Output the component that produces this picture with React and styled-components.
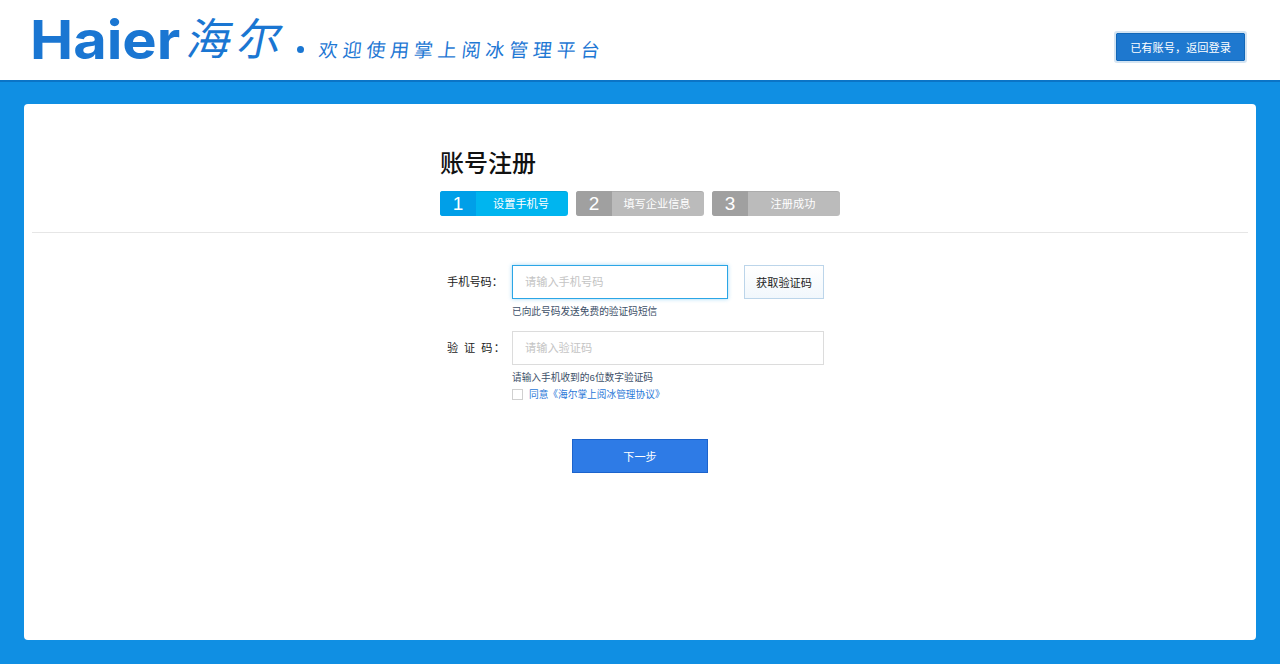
import styled, { createGlobalStyle } from 'styled-components';

const GlobalStyle = createGlobalStyle`
    html, body { margin: 0; padding: 0; height: 100%; }
    body {
        background: #108fe3;
        font-family: "Liberation Sans", "Noto Sans CJK SC", sans-serif;
        font-size: 11.2px;
        overflow: hidden;
    }
`

const Header = styled.header`
    height: 82px;
    box-sizing: border-box;
    background: #fff;
    border-bottom: 2px solid #0b74c6;
    padding: 0 35px 0 32px;
    display: flex;
    align-items: center;
    justify-content: space-between;
`

const LogoRow = styled.div`
    display: flex;
    align-items: center;
    height: 80px;
    color: #1a76d2;
`

const LogoWord = styled.span`
    font-family: Inter, "Liberation Sans", sans-serif;
    font-weight: 700;
    font-size: 54px;
    line-height: 54px;
    width: 148px;
    margin-left: -2px;
    margin-right: 2px;
    transform: scaleX(1.07);
    transform-origin: left center;
`

const LogoBrush = styled.span`
    font-family: "Noto Sans CJK SC", sans-serif;
    font-weight: 400;
    font-size: 44px;
    line-height: 44px;
    letter-spacing: 6px;
    margin: 0 0 8px 9px;
    width: 97px;
    white-space: nowrap;
    transform: skewX(-12deg);
`

const LogoDot = styled.i`
    width: 7px;
    height: 7px;
    border-radius: 50%;
    background: #1a76d2;
    margin: 18px 0 0 11px;
`

const Slogan = styled.span`
    font-family: "Noto Sans CJK SC", sans-serif;
    font-size: 19px;
    font-weight: 400;
    letter-spacing: 4.8px;
    margin: 16px 0 0 15px;
    color: #1f78d4;
    white-space: nowrap;
    transform: skewX(-6deg);
`

const BackButton = styled.button`
    width: 129px;
    height: 28px;
    margin-top: 14px;
    box-sizing: border-box;
    background: #1e78cf;
    border: 1px solid #1267b8;
    outline: 2px solid #d4e4f2;
    border-radius: 1px;
    color: #fff;
    font: inherit;
    padding: 0;
`

const Page = styled.main`
    padding: 22px 24px 24px;
`

const Card = styled.section`
    height: 536px;
    box-sizing: border-box;
    background: #fff;
    border-radius: 4px;
    padding: 0 8px;
`

const TopBlock = styled.div`
    width: 400px;
    margin: 0 auto;
    padding-top: 46px;
`

const Title = styled.h1`
    margin: 0;
    font-size: 24px;
    line-height: 28px;
    font-weight: 500;
    color: #111;
`

const Steps = styled.div`
    display: flex;
    gap: 8px;
    margin-top: 13px;
`

const Step = styled.div`
    width: 128px;
    height: 25px;
    display: flex;
    border-radius: 3px;
    overflow: hidden;
    color: #fff;
    background: ${(p) => (p.$active ? '#00b5ef' : '#bbbbbb')};
    box-shadow: inset 0 1px 0 rgba(0,0,0,.08);
`

const StepNum = styled.span`
    width: 36px;
    display: flex;
    align-items: center;
    justify-content: center;
    font-size: 19px;
    background: ${(p) => (p.$active ? '#009fe8' : '#a0a0a0')};
`

const StepText = styled.span`
    flex: 1;
    display: flex;
    align-items: center;
    justify-content: center;
    padding: 0 2px 1px 0;
`

const Divider = styled.hr`
    margin: 16px 0 0;
    border: 0;
    border-top: 1px solid #e6e6e6;
`

const Form = styled.form`
    width: 400px;
    margin: 0 auto;
    padding-top: 32px;
`

const Row = styled.div`
    display: flex;
    align-items: center;
`

const Label = styled.label`
    width: 72px;
    box-sizing: border-box;
    padding: 0 0 3px 7px;
    color: #222;
    white-space: pre;
    letter-spacing: ${(p) => (p.$spaced ? '1.4px' : '0')};
`

const Input = styled.input`
    box-sizing: border-box;
    width: ${(p) => p.$width}px;
    height: 34px;
    padding: 0 12px;
    background: #fff;
    font-family: inherit;
    font-size: 11.2px;
    outline: none;
    border: 1px solid ${(p) => (p.$focus ? '#2ba6e6' : '#dcdcdc')};
    box-shadow: ${(p) => (p.$focus ? '0 0 4px rgba(43,166,230,.45)' : 'none')};
    &::placeholder { color: #c4c4c4; opacity: 1; }
`

const CodeButton = styled.button`
    width: 80px;
    height: 34px;
    margin-left: 16px;
    padding: 0;
    box-sizing: border-box;
    border: 1px solid #bcd5ea;
    background: linear-gradient(#fff, #f1f7fc);
    color: #222;
    font: inherit;
`

const Hint = styled.p`
    margin: 0;
    padding-left: 72px;
    color: #3d5068;
    font-size: 9.7px;
    line-height: 14px;
    margin-top: 6px;
    margin-bottom: ${(p) => p.$bottom}px;
`

const AgreeRow = styled.div`
    display: flex;
    align-items: center;
    padding-left: 72px;
    margin-top: 2px;
    height: 14px;
`

const Check = styled.i`
    width: 9px;
    height: 9px;
    border: 1px solid #d0d0d0;
    background: #fff;
    margin-right: 6px;
`

const Agree = styled.a`
    color: #2a78d8;
    font-size: 9.7px;
`

const Submit = styled.button`
    display: block;
    width: 136px;
    height: 34px;
    margin: 38px auto 0;
    padding: 0;
    background: #2e7be6;
    border: 1px solid #1c63cc;
    color: #fff;
    font: inherit;
`

const steps = ['设置手机号', '填写企业信息', '注册成功'];

export default function App(){
    return(
        <>
        <GlobalStyle />
        <Header>
            <LogoRow>
                <LogoWord>Haier</LogoWord>
                <LogoBrush>海尔</LogoBrush>
                <LogoDot />
                <Slogan>欢迎使用掌上阅冰管理平台</Slogan>
            </LogoRow>
            <BackButton type="button">已有账号，返回登录</BackButton>
        </Header>

        <Page>
            <Card>
                <TopBlock>
                    <Title>账号注册</Title>
                    <Steps>
                        {steps.map((text, i) => (
                            <Step key={text} $active={i === 0}>
                                <StepNum $active={i === 0}>{i + 1}</StepNum>
                                <StepText>{text}</StepText>
                            </Step>
                        ))}
                    </Steps>
                </TopBlock>
                <Divider />
                <Form>
                    <Row>
                        <Label>手机号码：</Label>
                        <Input $focus $width={216} placeholder="请输入手机号码" />
                        <CodeButton type="button">获取验证码</CodeButton>
                    </Row>
                    <Hint $bottom={12}>已向此号码发送免费的验证码短信</Hint>
                    <Row>
                        <Label $spaced>验 证 码：</Label>
                        <Input $width={312} placeholder="请输入验证码" />
                    </Row>
                    <Hint $bottom={0}>请输入手机收到的6位数字验证码</Hint>
                    <AgreeRow>
                        <Check />
                        <Agree>同意《海尔掌上阅冰管理协议》</Agree>
                    </AgreeRow>
                    <Submit type="button">下一步</Submit>
                </Form>
            </Card>
        </Page>
        </>
    )
};
